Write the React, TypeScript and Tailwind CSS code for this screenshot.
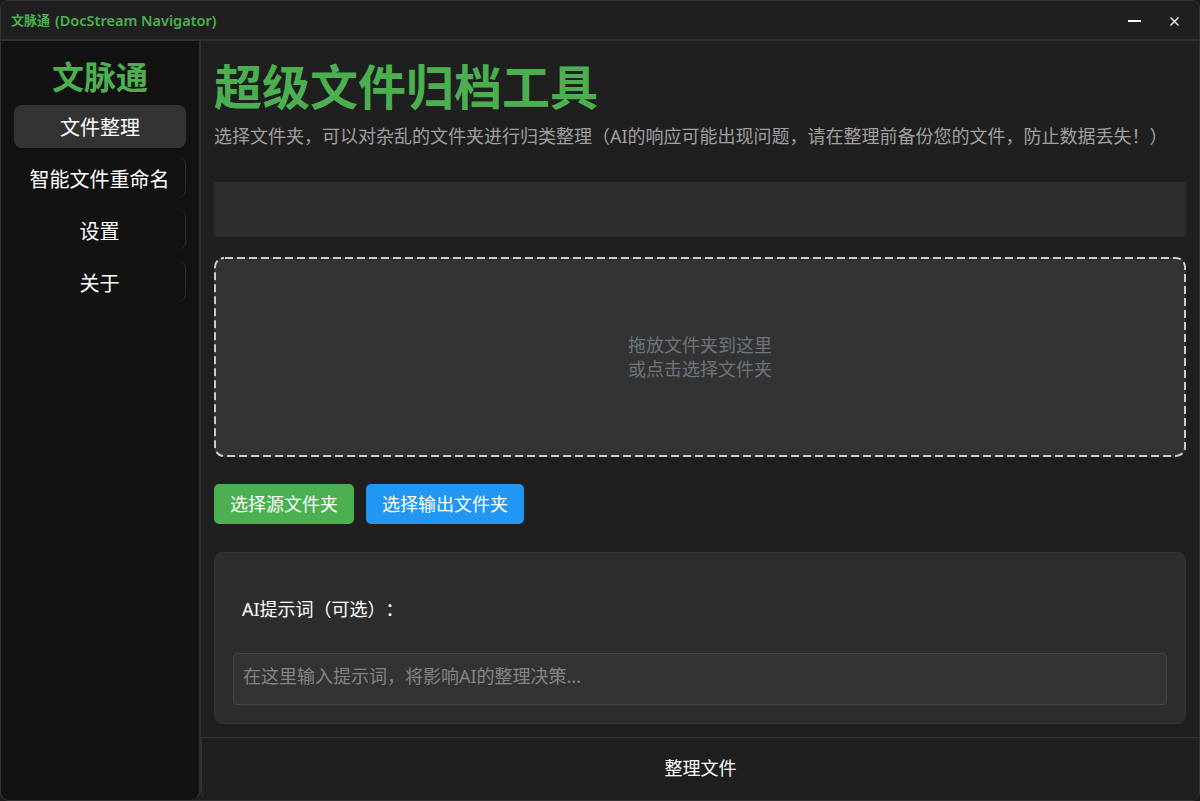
import React from "react";

const FONT = "font-['Segoe_UI','Noto_Sans','Noto_Sans_CJK_SC',sans-serif] [text-spacing-trim:space-all]";

function NavItem({ label, active }: { label: string; active?: boolean }) {
  return (
    <div
      className={
        active
          ? "h-[43px] w-[172px] flex items-center justify-center rounded-[8px] bg-[#333333] text-white text-[20px] mb-[9px] pt-[2px]"
          : "h-[41px] w-[172px] flex items-center justify-center rounded-[8px] border-r border-[#2c2c2c] text-white text-[20px] mb-[11px] pt-[4px]"
      }
    >
      {label}
    </div>
  );
}

export default function App() {
  return (
    <div className={`w-[1200px] h-[801px] overflow-hidden bg-[#1b1b1b] ${FONT}`}>
      <div className="w-full h-full flex flex-col rounded-[8px] border border-[#333333] bg-[#1f1f1f] overflow-hidden">
        {/* Title bar */}
        <div className="h-[40px] shrink-0 flex items-center justify-between border-b-2 border-[#303030] bg-[#1f1f1f]">
          <div className="pl-[10px] text-[#4caf50] leading-none font-semibold flex items-center gap-[5px] mt-[1px]">
            <span className="text-[13px]">文脉通</span>
            <span className="text-[14.5px]">(DocStream Navigator)</span>
          </div>
          <div className="flex items-center">
            <div className="w-[40px] h-[38px] flex items-center justify-center">
              <div className="w-[13px] h-[2px] bg-white mt-[1px]" />
            </div>
            <div className="w-[40px] h-[38px] flex items-center justify-center mr-[5px]">
              <svg width="9" height="9" viewBox="0 0 9 9" className="mt-[3px]">
                <path d="M0.5 0.5L8.5 8.5M8.5 0.5L0.5 8.5" stroke="#ffffff" strokeWidth="1.3" fill="none" />
              </svg>
            </div>
          </div>
        </div>

        <div className="flex-1 flex min-h-0">
          {/* Sidebar */}
          <div className="w-[200px] shrink-0 flex flex-col items-center bg-[#121212] border-r-2 border-[#303030] rounded-bl-[8px] rounded-br-[10px]">
            <div className="mt-[14px] mb-[7px] h-[43px] flex items-center justify-center text-[32px] font-bold text-[#4caf50] leading-none w-[172px]">
              文脉通
            </div>
            <NavItem label="文件整理" active />
            <NavItem label="智能文件重命名" />
            <NavItem label="设置" />
            <NavItem label="关于" />
          </div>

          {/* Main */}
          <div className="flex-1 min-w-0 flex flex-col">
            <div className="flex-1 min-h-0 flex flex-col pl-[13px] pr-[13px]">
              <h1 className="mt-[18px] text-[48px] leading-[56px] font-bold text-[#4caf50]">超级文件归档工具</h1>
              <p className="text-[18px] leading-[24px] text-[#a0a0a0] mt-[9px] whitespace-nowrap">
                选择文件夹，可以对杂乱的文件夹进行归类整理（AI的响应可能出现问题，请在整理前备份您的文件，防止数据丢失！）
              </p>
              <div className="mt-[34px] h-[55px] rounded-[2px] bg-[#2d2d2d]" />
              <div className="relative mt-[20px] h-[200px] rounded-[10px] bg-[#333333] flex flex-col items-center justify-center text-[18px] leading-[24px] text-[#6c757d]">
                <svg className="absolute inset-0" width="972" height="200" viewBox="0 0 972 200" fill="none">
                  <rect x="1" y="1" width="970" height="198" rx="9" stroke="#cccccc" strokeWidth="2" strokeDasharray="8 4" strokeDashoffset="-1" />
                </svg>
                <div>拖放文件夹到这里</div>
                <div>或点击选择文件夹</div>
              </div>
              <div className="mt-[27px] flex gap-[12px]">
                <div className="h-[40px] w-[140px] rounded-[5px] bg-[#4caf50] text-white text-[18px] flex items-center justify-center">选择源文件夹</div>
                <div className="h-[40px] w-[158px] rounded-[5px] bg-[#2196f3] text-white text-[18px] flex items-center justify-center">选择输出文件夹</div>
              </div>
              <div className="mt-[28px] h-[172px] rounded-[8px] bg-[#2d2d2d] border border-[#333333] pl-[18px] pr-[18px] flex flex-col">
                <div className="mt-[43px] pl-[9px] h-[26px] leading-[26px] text-[18px] text-white">AI提示词（可选）：</div>
                <div className="mt-[31px] h-[52px] rounded-[4px] border border-[#444444] bg-[#333333] pl-[9px] pt-[9px] text-[18px] leading-[26px] text-[#858585]">
                  在这里输入提示词，将影响AI的整理决策...
                </div>
              </div>
            </div>
            <div className="h-[63px] shrink-0 flex items-center justify-center border-t border-l border-[#333333] bg-[#1f1f1f] rounded-bl-[8px] text-[18px] text-white pb-[2px]">
              整理文件
            </div>
          </div>
        </div>
      </div>
    </div>
  );
}
